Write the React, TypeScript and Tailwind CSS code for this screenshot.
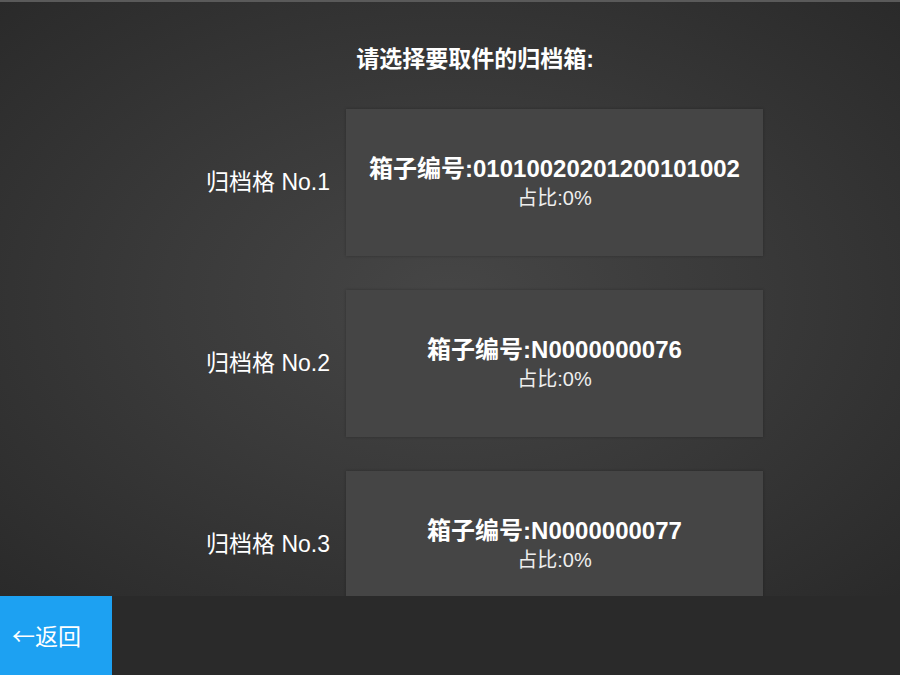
const boxes = [
  { slot: "No.1", code: "01010020201200101002", ratio: "0%" },
  { slot: "No.2", code: "N0000000076", ratio: "0%" },
  { slot: "No.3", code: "N0000000077", ratio: "0%" },
];

export default function App() {
  return (
    <div
      className="flex h-[675px] w-[900px] flex-col overflow-hidden border-t-2 border-[#5a5a5a] text-white"
      style={{ fontFamily: '"Liberation Sans", "Noto Sans CJK SC", sans-serif' }}
    >
      <main className="flex-1 overflow-hidden bg-[radial-gradient(ellipse_at_center,#464646_0%,#3a3a3a_45%,#2a2a2a_100%)]">
        <h1 className="pt-[42px] pl-[50px] text-center text-[23px] leading-[30px] font-bold">请选择要取件的归档箱:</h1>
        <div className="mt-[35px] flex flex-col gap-[34px]">
          {boxes.map((box) => (
            <div key={box.slot} className="flex items-center">
              <span className="w-[330px] text-right text-[23px]">归档格 {box.slot}</span>
              <div className="ml-[16px] flex h-[147px] w-[417px] flex-col items-center justify-center bg-[#454545] shadow-[0_0_3px_rgba(0,0,0,0.25)]">
                <p className="text-[24px] leading-[30px] font-bold">箱子编号:{box.code}</p>
                <p className="text-[20px] leading-[28px] text-[#eeeeee]">占比:{box.ratio}</p>
              </div>
            </div>
          ))}
        </div>
      </main>
      <footer className="flex h-[79px] bg-[#2a2a2a]">
        <button className="flex w-[112px] items-center bg-[#1da1f2] pl-[12px] text-[23px] text-white">
          <span style={{ fontFamily: '"Noto Sans CJK SC", sans-serif' }}>←返回</span>
        </button>
      </footer>
    </div>
  );
}
